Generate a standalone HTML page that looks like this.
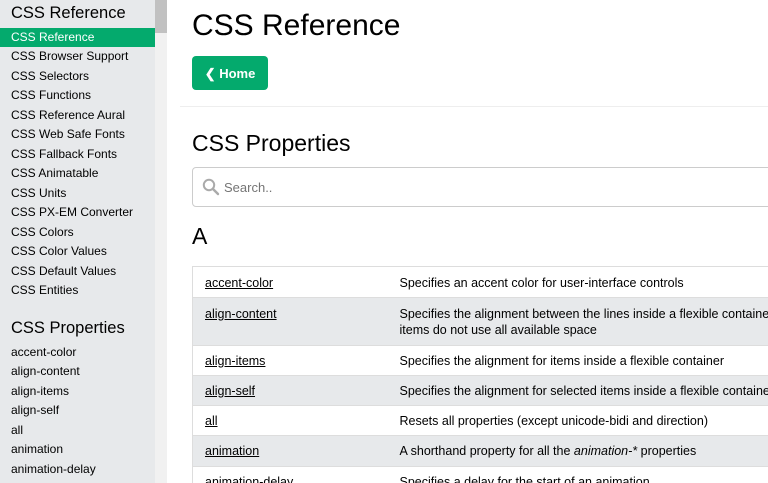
<!DOCTYPE html>
<html><head><style>
*{margin:0;padding:0;box-sizing:border-box}
html,body{width:768px;height:483px;overflow:hidden}
body{font-family:"Liberation Sans",sans-serif;color:#000;background:#fff;position:relative}
#side{position:absolute;left:0;top:0;width:155px;height:483px;background:#e7e9eb}
#sb{position:absolute;left:155px;top:0;width:12px;height:483px;background:#f1f1f1}
#thumb{position:absolute;left:155px;top:0;width:12px;height:33px;background:#c1c1c1}
.sh{position:absolute;left:11px;font-size:16.5px;color:#000}
.si{position:absolute;left:0;width:155px;height:19px;line-height:19px;padding-left:11px;font-size:12px;color:#000;white-space:nowrap}
.si.a{background:#04aa6d;color:#fff}
.t{position:absolute;left:192px;white-space:nowrap}
#btn{position:absolute;left:192px;top:56px;width:76px;height:34px;background:#04aa6d;border-radius:4px;color:#fff;font-weight:bold;font-size:13px;line-height:35px;text-align:center}
#hr{position:absolute;left:180px;top:106px;width:588px;height:1px;background:#eee}
#clip{position:absolute;left:192px;top:0;width:576px;height:483px;overflow:hidden}
#search{position:absolute;left:0;top:167px;width:600px;height:40px;border:1px solid #ccc;border-radius:4px}
#search span{position:absolute;left:31px;top:12px;font-size:13px;color:#757575}
table{position:absolute;left:0;top:266px;width:800px;border-collapse:collapse;font-size:12.5px;table-layout:fixed}
td{border-top:1px solid #ddd;padding:0 12px;vertical-align:top;line-height:16px;white-space:nowrap;overflow:hidden}
tr:nth-child(even) td{background:#e7e9eb}
td:first-child{width:195px;border-left:1px solid #ddd}
td a{color:#000;text-decoration:underline}
</style></head><body>
<div id="side"></div><div id="sb"></div><div id="thumb"></div>
<div class="sh" style="top:4px">CSS Reference</div>
<div class="si a" style="top:28px">CSS Reference</div>
<div class="si" style="top:47px">CSS Browser Support</div>
<div class="si" style="top:67px">CSS Selectors</div>
<div class="si" style="top:86px">CSS Functions</div>
<div class="si" style="top:106px">CSS Reference Aural</div>
<div class="si" style="top:125px">CSS Web Safe Fonts</div>
<div class="si" style="top:145px">CSS Fallback Fonts</div>
<div class="si" style="top:164px">CSS Animatable</div>
<div class="si" style="top:184px">CSS Units</div>
<div class="si" style="top:203px">CSS PX-EM Converter</div>
<div class="si" style="top:223px">CSS Colors</div>
<div class="si" style="top:242px">CSS Color Values</div>
<div class="si" style="top:262px">CSS Default Values</div>
<div class="si" style="top:281px">CSS Entities</div>
<div class="sh" style="top:319px">CSS Properties</div>
<div class="si" style="top:343px">accent-color</div>
<div class="si" style="top:362px">align-content</div>
<div class="si" style="top:382px">align-items</div>
<div class="si" style="top:401px">align-self</div>
<div class="si" style="top:421px">all</div>
<div class="si" style="top:440px">animation</div>
<div class="si" style="top:460px">animation-delay</div>

<div class="t" style="top:9px;font-size:30px">CSS Reference</div>
<div id="btn">&#10094; Home</div>
<div id="hr"></div>
<div class="t" style="top:130px;font-size:23px">CSS Properties</div>
<div class="t" style="top:223px;font-size:23px">A</div>
<div id="clip">
<div id="search"><svg style="position:absolute;left:9px;top:10px" width="18" height="18" viewBox="0 0 18 18"><circle cx="7" cy="7" r="5.2" fill="none" stroke="#aaa" stroke-width="2"/><path d="M11 11l5 5" stroke="#aaa" stroke-width="2.4" stroke-linecap="round"/></svg><span>Search..</span></div>
<table>
<tr><td style="height:31px;padding-top:8px"><a>accent-color</a></td><td style="padding-top:8px">Specifies an accent color for user-interface controls</td></tr>
<tr><td style="height:48px;padding-top:8px"><a>align-content</a></td><td style="padding-top:8px">Specifies the alignment between the lines inside a flexible container when the<br>items do not use all available space</td></tr>
<tr><td style="height:30px;padding-top:7px"><a>align-items</a></td><td style="padding-top:7px">Specifies the alignment for items inside a flexible container</td></tr>
<tr><td style="height:30px;padding-top:7px"><a>align-self</a></td><td style="padding-top:7px">Specifies the alignment for selected items inside a flexible container</td></tr>
<tr><td style="height:30px;padding-top:7px"><a>all</a></td><td style="padding-top:7px">Resets all properties (except unicode-bidi and direction)</td></tr>
<tr><td style="height:31px;padding-top:7px"><a>animation</a></td><td style="padding-top:7px">A shorthand property for all the <i>animation-*</i> properties</td></tr>
<tr><td style="height:30px;padding-top:7px"><a>animation-delay</a></td><td style="padding-top:7px">Specifies a delay for the start of an animation</td></tr>
</table>
</div>
</body></html>
